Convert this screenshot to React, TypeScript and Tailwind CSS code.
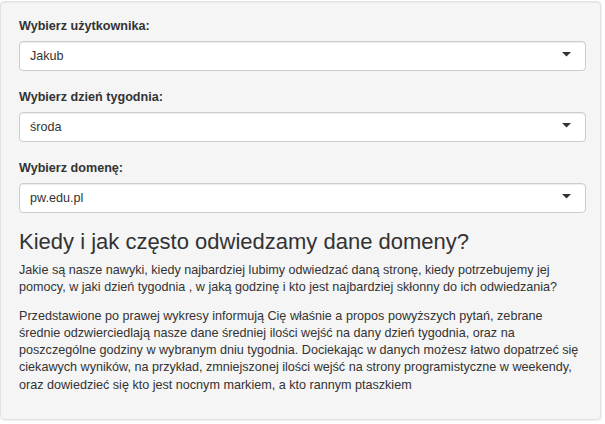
import React from "react";

function Caret() {
  return (
    <svg width="9" height="5" viewBox="0 0 9 5" className="ml-auto mr-[14px] mb-[3px] shrink-0">
      <path d="M0 0 L9 0 L4.5 4.5 Z" fill="#333333" />
    </svg>
  );
}

function SelectField({ label, value }: { label: string; value: string }) {
  return (
    <div className="mb-[17px]">
      <div className="font-bold text-[12.6px] leading-[18px] mb-[6px] text-[#333333]">{label}</div>
      <div className="h-[30px] flex items-center bg-white border border-[#cccccc] rounded-[4px] shadow-[inset_0_1px_1px_rgba(0,0,0,0.075)] pl-[10px]">
        <span className="text-[12.6px] text-[#333333]">{value}</span>
        <Caret />
      </div>
    </div>
  );
}

export default function App() {
  return (
    <div
      className="w-[605px] h-[424px] bg-white pt-[1px]"
      style={{ fontFamily: '"Liberation Sans", Arial, sans-serif' }}
    >
      <div className="w-[601px] h-[419px] bg-[#f5f5f5] border border-[#e3e3e3] rounded-[4px] shadow-[inset_0_1px_1px_rgba(0,0,0,0.05),1px_1px_1px_rgba(0,0,0,0.06)] pl-[18px] pr-[14px] pt-[15px] text-[#333333]">
        <SelectField label="Wybierz użytkownika:" value="Jakub" />
        <SelectField label="Wybierz dzień tygodnia:" value="środa" />
        <SelectField label="Wybierz domenę:" value="pw.edu.pl" />
        <h3 className="mt-[9px] mb-[8px] text-[22px] leading-[24px] font-normal">
          Kiedy i jak często odwiedzamy dane domeny?
        </h3>
        <p className="text-[12.6px] leading-[17.3px] mb-[11px]">
          Jakie są nasze nawyki, kiedy najbardziej lubimy odwiedzać daną stronę, kiedy potrzebujemy jej
          pomocy, w jaki dzień tygodnia , w jaką godzinę i kto jest najbardziej skłonny do ich odwiedzania?
        </p>
        <p className="text-[12.6px] leading-[17.3px]">
          Przedstawione po prawej wykresy informują Cię właśnie a propos powyższych pytań, zebrane
          średnie odzwierciedlają nasze dane średniej ilości wejść na dany dzień tygodnia, oraz na
          poszczególne godziny w wybranym dniu tygodnia. Dociekając w danych możesz łatwo dopatrzeć się
          ciekawych wyników, na przykład, zmniejszonej ilości wejść na strony programistyczne w weekendy,
          oraz dowiedzieć się kto jest nocnym markiem, a kto rannym ptaszkiem
        </p>
      </div>
    </div>
  );
}
